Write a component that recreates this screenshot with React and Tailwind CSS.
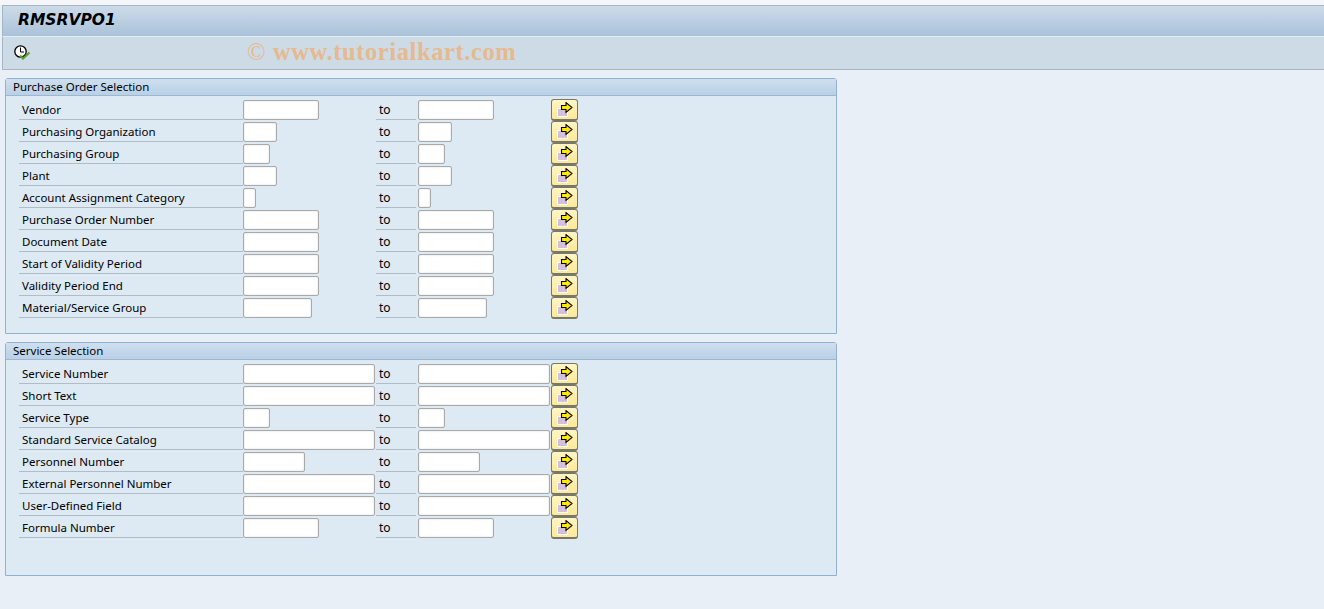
const poRows = [
  ["Vendor", "w-[76px]"],
  ["Purchasing Organization", "w-[34px]"],
  ["Purchasing Group", "w-[27px]"],
  ["Plant", "w-[34px]"],
  ["Account Assignment Category", "w-[13px]"],
  ["Purchase Order Number", "w-[76px]"],
  ["Document Date", "w-[76px]"],
  ["Start of Validity Period", "w-[76px]"],
  ["Validity Period End", "w-[76px]"],
  ["Material/Service Group", "w-[69px]"],
];

const serviceRows = [
  ["Service Number", "w-[132px]"],
  ["Short Text", "w-[132px]"],
  ["Service Type", "w-[27px]"],
  ["Standard Service Catalog", "w-[132px]"],
  ["Personnel Number", "w-[62px]"],
  ["External Personnel Number", "w-[132px]"],
  ["User-Defined Field", "w-[132px]"],
  ["Formula Number", "w-[76px]"],
];

const ClockIcon = () => (
  <svg width="17" height="15" viewBox="0 0 17 15" className="block">
    <circle cx="6.5" cy="6.5" r="5.7" fill="#fff" stroke="#000" strokeWidth="1.3" />
    <path d="M6.5 2.5V7H10" fill="none" stroke="#000" strokeWidth="1" />
    <path d="M6 10.5L9 13.5L15.5 7.5" fill="none" stroke="#58a033" strokeWidth="2.2" />
  </svg>
);

const ArrowIcon = () => (
  <svg width="16" height="15" viewBox="0 0 16 15" className="block">
    <rect x="0.5" y="6.5" width="10" height="8" fill="#d4bfdc" stroke="#fff" />
    <path d="M4.5 3.5H9V0.6L15 5.5L9 10.4V7.5H4.5Z" fill="#ffe900" stroke="#000" strokeWidth="1.1" />
  </svg>
);

const Field = ({ width }) => (
  <div className={`h-[20px] ${width} shrink-0 bg-white border border-[#a9a9a9] rounded-[2px] shadow-[inset_0_0_2px_#d5d5d5]`} />
);

const Row = ({ label, width }) => (
  <div className="grid grid-cols-[224px_133px_42px_133px_27px] h-[22px] items-center">
    <div className="h-[21px] self-start border-b border-[#b3bcc4] pl-[3px] pt-[1px] text-[11.5px] leading-[20px] text-black whitespace-nowrap">
      {label}
    </div>
    <Field width={width} />
    <div className="h-[21px] self-start mr-[2px] border-b border-[#b3bcc4] pl-[3px] pt-[1px] text-[12px] leading-[20px] text-black">
      to
    </div>
    <Field width={width} />
    <button className="h-[22px] w-[27px] flex items-center justify-center rounded-[3px] border border-[#77776c] border-b-2 bg-gradient-to-b from-[#fff6c4] to-[#ffe897]">
      <ArrowIcon />
    </button>
  </div>
);

const Panel = ({ title, rows, className }) => (
  <section className={`mx-[5px] w-[832px] bg-[#dde9f3] border border-[#8fb2d3] rounded-t-[3px] ${className}`}>
    <div className="h-[17px] border-b border-[#9db7d0] bg-gradient-to-b from-[#cfdfee] to-[#b9d0e6] pl-[7px] text-[11.5px] leading-[15px] text-black">
      {title}
    </div>
    <div className="pl-[13px] pt-[3px]">
      {rows.map(([label, width]) => (
        <Row key={label} label={label} width={width} />
      ))}
    </div>
  </section>
);

export default function App() {
  return (
    <div className="font-['Noto_Sans',sans-serif] relative w-[1324px] h-[609px] overflow-hidden bg-[#e8eff7]">
      <div className="h-[5px] bg-[#f4f6fa]" />
      <div className="ml-[2px] h-[31px] border-t border-l border-[#a3b5c7] bg-gradient-to-b from-[#cddbe8] to-[#aac2da] pl-[15px] font-['DejaVu_Sans',sans-serif] text-[15.5px] leading-[28px] font-bold italic text-black">
        RMSRVPO1
      </div>
      <div className="ml-[2px] h-[34px] border-t border-l border-b border-t-[#e6eef5] border-l-[#a3b5c7] border-b-[#a8b6c4] bg-[#cddbe7] pl-[11px] pt-[8px]">
        <ClockIcon />
      </div>
      <div className="absolute left-[247px] top-[38px] font-['Liberation_Serif',serif] font-bold text-[24.5px] tracking-[0.6px] leading-[28px] text-[#e6b98e] whitespace-nowrap">
        <span className="font-normal">©</span> www.tutorialkart.com
      </div>
      <div className="pt-[8px]">
        <Panel title="Purchase Order Selection" rows={poRows} className="h-[256px]" />
        <Panel title="Service Selection" rows={serviceRows} className="h-[234px] mt-[8px]" />
      </div>
    </div>
  );
}
